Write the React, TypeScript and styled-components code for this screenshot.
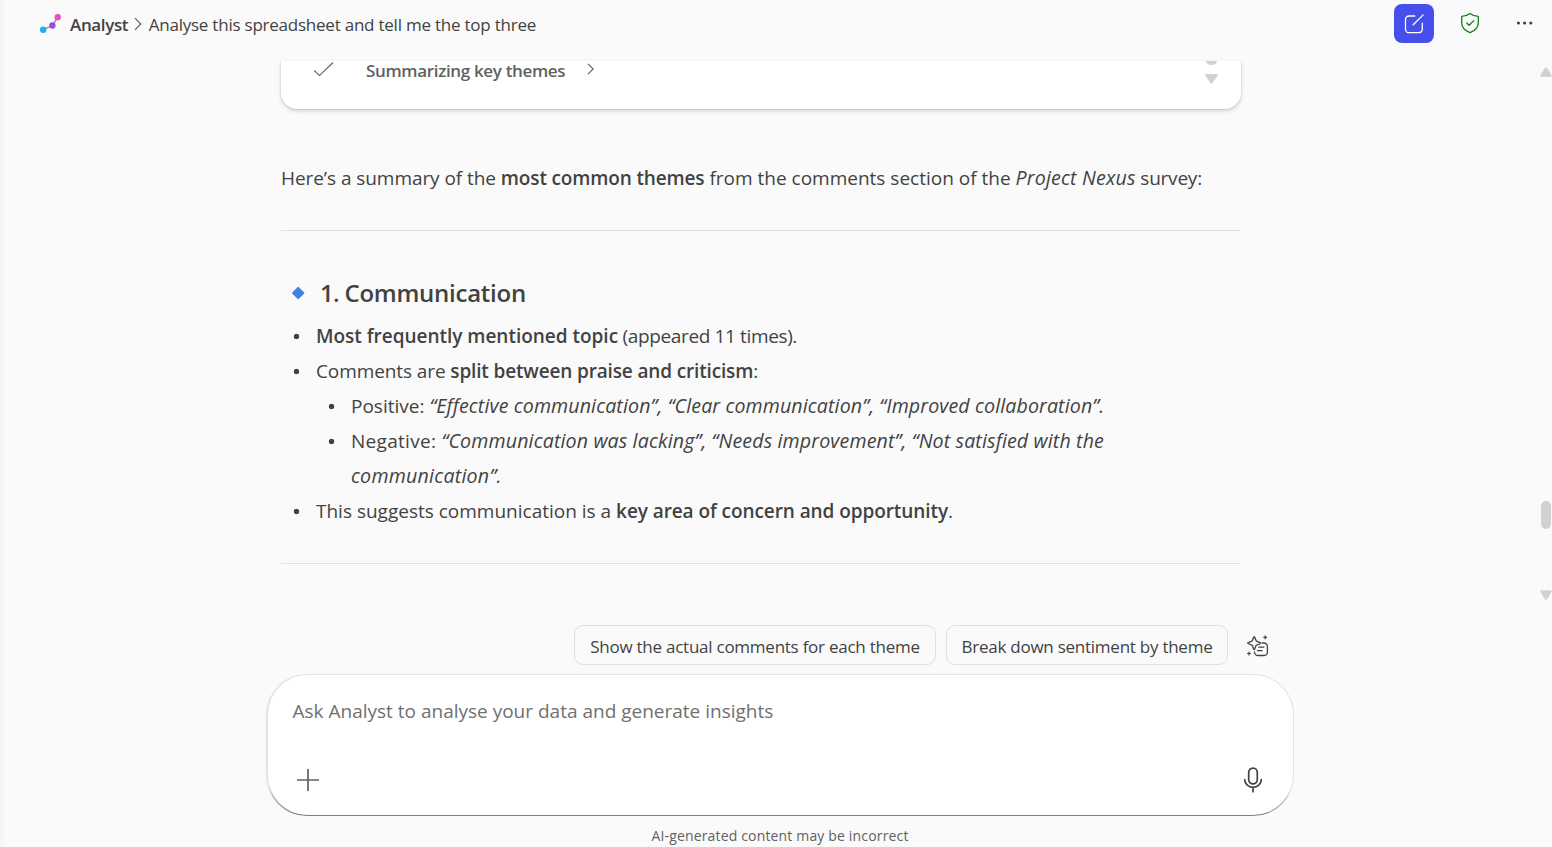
import React from "react";
import styled, { createGlobalStyle } from "styled-components";

const Global = createGlobalStyle`
  * { box-sizing: border-box; }
  body { margin: 0; background: #fafafa; color: #424242; font-family: "Open Sans", "Noto Sans", sans-serif; }
  svg { display: block; flex: none; }
`;

const Page = styled.div`
  width: 1552px;
  height: 847px;
  overflow: hidden;
  display: flex;
  flex-direction: column;
  border-left: 4px solid #f5f5f5;
`;

const Header = styled.header`
  flex: none;
  height: 61px;
  padding: 4px 18px 0 36px;
  display: flex;
  align-items: flex-start;
`;

const Breadcrumb = styled.div`
  flex: 1;
  height: 40px;
  display: flex;
  align-items: center;
  font-size: 17px;
  line-height: 38px;
`;

const Crumb = styled.span<{ $current?: boolean }>`
  padding-top: 2px;
  font-weight: ${p => (p.$current ? 400 : 600)};
  letter-spacing: ${p => (p.$current ? "-0.23px" : "-0.36px")};
  margin-left: ${p => (p.$current ? 6.5 : 9)}px;
  margin-right: ${p => (p.$current ? 0 : 6)}px;
`;

const Actions = styled.div`
  display: flex;
  align-items: center;
  height: 39px;
`;

const NewChat = styled.button`
  width: 40px;
  height: 39px;
  border: 0;
  padding: 0;
  border-radius: 8px;
  background: #464feb;
  display: grid;
  place-items: center;
  margin-right: 25.5px;
`;

const IconButton = styled.button<{ $gap?: number }>`
  border: 0;
  padding: 0;
  background: none;
  margin: -1px ${p => p.$gap || 0}px 0 0;
`;

const Scroller = styled.main`
  flex: none;
  height: 546px;
  display: flex;
  justify-content: space-between;
  padding-left: 277px;
`;

const Conversation = styled.div`
  width: 960px;
  flex: none;
`;

const StepCard = styled.section`
  height: 48px;
  border-radius: 0 0 16px 16px;
  background: #fff;
  box-shadow: 0 2px 4px rgba(0, 0, 0, 0.15), 1px 1px 1px rgba(0, 0, 0, 0.05), -1px 1px 1px rgba(0, 0, 0, 0.05);
  display: flex;
  align-items: flex-start;
  padding: 0 22px 0 32px;
`;

const StepIcon = styled.span<{ $top: number; $right: number }>`
  margin: ${p => p.$top}px ${p => p.$right}px 0 0;
`;

const StepTitle = styled.span`
  color: #616161;
  font-size: 17px;
  line-height: 20px;
  font-weight: 600;
  letter-spacing: -0.34px;
  margin-right: 22px;
`;

const StepScroll = styled.span`
  margin-left: auto;
`;

const Paragraph = styled.p`
  margin: 52px 0 0;
  font-size: 19px;
  line-height: 35px;
  height: 35px;
  white-space: nowrap;
`;

const Run = styled.span<{ $ls?: number; $bold?: boolean; $italic?: boolean }>`
  white-space: pre;
  letter-spacing: ${p => p.$ls || 0}px;
  font-weight: ${p => (p.$bold ? 600 : 400)};
  ${p => p.$italic && "font-style: italic; font-size: 19.6px; line-height: 1;"}
`;

const Divider = styled.hr<{ $top: number }>`
  border: 0;
  height: 1px;
  background: #e0e0e0;
  margin: ${p => p.$top}px 0 0;
`;

const Heading = styled.h3`
  margin: 44px 0 8px;
  height: 36px;
  display: flex;
  align-items: center;
  padding-left: 10px;
  gap: 14px;
  font-size: 24px;
  line-height: 36px;
`;

const List = styled.ul`
  list-style: none;
  margin: 0;
  padding: 0;
  font-size: 19px;
  line-height: 35px;
`;

const Item = styled.li`
  padding-left: 35px;
  white-space: nowrap;
  background: radial-gradient(circle at 15.5px 17.5px, #424242 2.4px, transparent 3.1px);
`;

const PageScrollbar = styled.div`
  width: 12px;
  flex: none;
  display: flex;
  flex-direction: column;
  align-items: center;
  justify-content: space-between;
  padding: 6px 0 7px;
`;

const Track = styled.div`
  flex: 1;
  display: flex;
  align-items: flex-end;
  padding-bottom: 61px;
`;

const Thumb = styled.div`
  width: 10px;
  height: 28px;
  border-radius: 5px;
  background: #d1d1d1;
`;

const Suggestions = styled.div`
  flex: none;
  height: 49px;
  margin-top: 18px;
  padding-left: 570px;
  display: flex;
  align-items: flex-start;
  gap: 10px;
`;

const Chip = styled.button<{ $width: number }>`
  width: ${p => p.$width}px;
  height: 40px;
  padding: 3px 0 0;
  border: 1px solid #e0e0e0;
  border-radius: 9px;
  background: #fafafa;
  color: #424242;
  font: 400 17px/35px "Open Sans", sans-serif;
  letter-spacing: -0.25px;
  white-space: nowrap;
  text-align: center;
`;

const SuggestIcon = styled.span`
  margin: 10px 0 0 8px;
`;

const Composer = styled.section`
  flex: none;
  width: 1028px;
  height: 142px;
  margin-left: 262px;
  border: 1px solid transparent;
  border-left-width: 2px;
  border-radius: 41px;
  background:
    linear-gradient(#fff, #fff) padding-box,
    linear-gradient(#e3e3e3 80%, #808080 99%) border-box;
  padding: 19px 30px 21px 24.5px;
  display: flex;
  flex-direction: column;
  justify-content: space-between;
`;

const Placeholder = styled.div`
  color: #707070;
  font-size: 19px;
  line-height: 34px;
`;

const Tools = styled.div`
  display: flex;
  align-items: center;
  justify-content: space-between;
  padding-left: 3px;
  height: 28px;
`;

const Disclaimer = styled.footer`
  margin-left: 262px;
  width: 1028px;
  padding-top: 10px;
  text-align: center;
  font-size: 14px;
  line-height: 20px;
  letter-spacing: 0.16px;
  color: #616161;
`;

const Triangle = ({ up }: { up?: boolean }) => (
  <svg width="12" height="10" viewBox="0 0 12 10">
    <path
      d={up ? "M6 1.4 10.6 8.6H1.4Z" : "M6 8.6 1.4 1.4H10.6Z"}
      fill="#d1d1d1"
      stroke="#d1d1d1"
      strokeWidth="2.4"
      strokeLinejoin="round"
    />
  </svg>
);

const Logo = () => (
  <svg width="21" height="20" viewBox="0 0 21 20">
    <path d="M3 15.8 12.3 11.5 17.7 3.2" fill="none" stroke="#8f8a94" strokeWidth="1.3" />
    <circle cx="3.2" cy="15.8" r="3.2" fill="#1fb2e8" />
    <circle cx="12.4" cy="11.5" r="3.2" fill="#9a4ddc" />
    <circle cx="17.7" cy="3.3" r="3.2" fill="#ea4fc8" />
  </svg>
);

export default function App() {
  return (
    <Page>
      <Global />
      <Header>
        <Breadcrumb>
          <Logo />
          <Crumb>Analyst</Crumb>
          <svg width="8" height="14" viewBox="0 0 8 14">
            <path d="M1 1.2 6.8 7 1 12.8" fill="none" stroke="#616161" strokeWidth="1.2" />
          </svg>
          <Crumb $current>Analyse this spreadsheet and tell me the top three</Crumb>
        </Breadcrumb>
        <Actions>
          <NewChat aria-label="New chat">
            <svg width="20" height="20" viewBox="0 0 20 20" fill="none" stroke="#fff" strokeWidth="1.3" strokeLinecap="round">
              <path d="M10.8 2H5A3.5 3.5 0 0 0 1.5 5.5v9.7A3.5 3.5 0 0 0 5 18.7h9.8a3.5 3.5 0 0 0 3.5-3.5V9.2M9.2 10.8 19.2.9" />
            </svg>
          </NewChat>
          <IconButton $gap={36.5} aria-label="Protected">
            <svg width="20" height="22" viewBox="0 0 20 22" fill="none" stroke="#107c10" strokeWidth="1.3" strokeLinecap="round" strokeLinejoin="round">
              <path d="M10 1.4C7.6 3.2 5 4.2 1.7 4.4v6.1c0 4.9 3.2 8.3 8.3 10.2 5.1-1.9 8.3-5.3 8.3-10.2V4.4C15 4.2 12.4 3.2 10 1.4ZM6.8 11l2.3 2.3 4.7-4.7" />
            </svg>
          </IconButton>
          <IconButton aria-label="More">
            <svg width="18" height="6" viewBox="0 0 18 6" fill="#424242">
              <circle cx="2.4" cy="3" r="1.6" />
              <circle cx="8.6" cy="3" r="1.6" />
              <circle cx="14.8" cy="3" r="1.6" />
            </svg>
          </IconButton>
        </Actions>
      </Header>

      <Scroller>
        <Conversation>
          <StepCard>
            <StepIcon $top={0} $right={32}>
              <svg width="21" height="17" viewBox="0 0 21 17">
                <path d="M1.3 9.5 6.5 14.6 20 1.5" fill="none" stroke="#616161" strokeWidth="1.1" />
              </svg>
            </StepIcon>
            <StepTitle>Summarizing key themes</StepTitle>
            <StepIcon $top={2} $right={0}>
              <svg width="8" height="12" viewBox="0 0 8 12">
                <path d="M1 .8 6.2 6 1 11.2" fill="none" stroke="#616161" strokeWidth="1.1" />
              </svg>
            </StepIcon>
            <StepScroll>
              <svg width="15" height="24" viewBox="0 0 15 24" fill="#d1d1d1">
                <path d="M2 0H13A5.6 5 0 0 1 2 0Z" />
                <path d="M7.5 21.4 2.4 14.2H12.6Z" stroke="#d1d1d1" strokeWidth="2.4" strokeLinejoin="round" />
              </svg>
            </StepScroll>
          </StepCard>

          <Paragraph>
            <Run $ls={-0.06}>{"Here’s a summary of the "}</Run>
            <Run $bold $ls={-0.14}>most common themes</Run>
            <Run>{" from the comments section of the "}</Run>
            <Run $italic $ls={0.18}>Project Nexus</Run>
            <Run $ls={-0.22}>{" survey:"}</Run>
          </Paragraph>
          <Divider $top={34} />
          <Heading>
            <svg width="15" height="14" viewBox="0 0 15 14">
              <path d="M7.2 1.4 12.8 7 7.2 12.6 1.6 7Z" fill="#3f83de" stroke="#3f83de" strokeWidth="1.2" strokeLinejoin="round" />
            </svg>
            <span>
              <Run $bold $ls={-0.7}>{"1. "}</Run>
              <Run $bold $ls={-0.25}>Communication</Run>
            </span>
          </Heading>
          <List>
            <Item>
              <Run $bold $ls={-0.02}>Most frequently mentioned topic</Run>
              <Run $ls={-0.37}>{" (appeared 11 times)."}</Run>
            </Item>
            <Item>
              <Run $ls={-0.1}>{"Comments are "}</Run>
              <Run $bold $ls={-0.15}>split between praise and criticism</Run>
              <Run>:</Run>
              <List>
                <Item>
                  <Run>{"Positive: "}</Run>
                  <Run $italic $ls={0.12}>“Effective communication”, “Clear communication”, “Improved collaboration”.</Run>
                </Item>
                <Item>
                  <Run $ls={0.3}>{"Negative: "}</Run>
                  <Run $italic $ls={0.14}>“Communication was lacking”, “Needs improvement”, “Not satisfied with the</Run>
                  <br />
                  <Run $italic $ls={0.24}>communication”.</Run>
                </Item>
              </List>
            </Item>
            <Item>
              <Run>{"This suggests communication is a "}</Run>
              <Run $bold $ls={-0.08}>key area of concern and opportunity</Run>
              <Run>.</Run>
            </Item>
          </List>
          <Divider $top={34} />
        </Conversation>
        <PageScrollbar>
          <Triangle up />
          <Track>
            <Thumb />
          </Track>
          <Triangle />
        </PageScrollbar>
      </Scroller>

      <Suggestions>
        <Chip $width={362}>Show the actual comments for each theme</Chip>
        <Chip $width={282}>Break down sentiment by theme</Chip>
        <SuggestIcon>
          <svg width="23" height="22" viewBox="0 0 23 22" fill="none" stroke="#424242" strokeWidth="1.3" strokeLinecap="round" strokeLinejoin="round">
            <path d="M8.2 1.6c.9 0 .9 3.1 2.2 4.4 1.3 1.3 4.4 1.2 4.4 2.1s-3.1.9-4.4 2.2c-1.3 1.3-1.3 4.3-2.2 4.3S7.3 11.6 6 10.3C4.7 9 1.6 9 1.6 8.1S4.7 7.3 6 6C7.3 4.7 7.3 1.6 8.2 1.6Z" />
            <path d="M16.3 8h1.5a3.6 3.6 0 0 1 3.6 3.6v5.3a3.6 3.6 0 0 1-3.6 3.6h-5.7a3.6 3.6 0 0 1-3.6-3.6M12.8 12.2h5M11.5 15.7h4.6" />
            <path d="M19.2.8v3M17.7 2.3h3M3 17v3M1.5 18.5h3" strokeWidth="1.2" />
          </svg>
        </SuggestIcon>
      </Suggestions>

      <Composer>
        <Placeholder>Ask Analyst to analyse your data and generate insights</Placeholder>
        <Tools>
          <svg width="24" height="24" viewBox="0 0 24 24">
            <path d="M12 1v22M1 12h22" stroke="#616161" strokeWidth="1.7" fill="none" />
          </svg>
          <svg width="20" height="26" viewBox="0 0 20 26" fill="none" stroke="#424242" strokeWidth="1.7" strokeLinecap="round">
            <rect x="5.7" y="1.2" width="8.6" height="15.6" rx="4.3" />
            <path d="M1.8 12.5v.5a8.2 7.3 0 0 0 16.4 0v-.5M10 20.5v4.2" />
          </svg>
        </Tools>
      </Composer>
      <Disclaimer>AI-generated content may be incorrect</Disclaimer>
    </Page>
  );
}
